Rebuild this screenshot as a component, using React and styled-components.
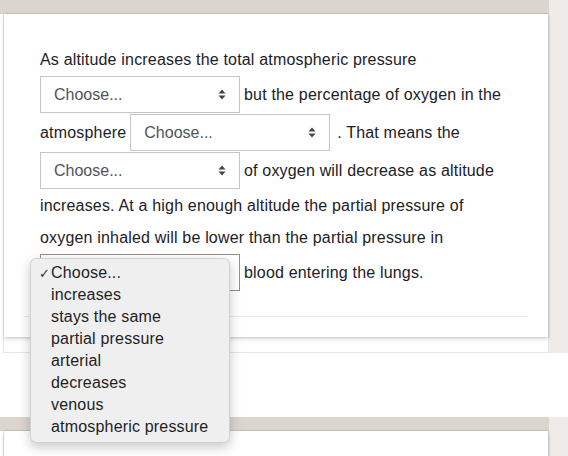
import React from 'react';
import styled, {createGlobalStyle} from 'styled-components';

const GlobalStyle = createGlobalStyle`
  body {
    margin: 0;
    background: #fff;
    font-family: "Liberation Sans", Arial, sans-serif;
  }
`;

const options = [
  'Choose...',
  'increases',
  'stays the same',
  'partial pressure',
  'arterial',
  'decreases',
  'venous',
  'atmospheric pressure'
];

const Arrow = () => (
  <svg width="8" height="11" viewBox="0 0 8 11">
    <path d="M4 0.5 L7.5 4.5 L0.5 4.5 Z" fill="#444" />
    <path d="M4 10.5 L7.5 6.5 L0.5 6.5 Z" fill="#444" />
  </svg>
);

// the open one shows its list on top, which hides its own label
const Choice = ({open, active}) => (
  <SelectWrap>
    <SelectBox $active={active}>
      {open ? <span /> : <span>Choose...</span>}
      <Arrow />
    </SelectBox>
    {open ? <Menu>
      {options.map((o, i) => <MenuItem key={o}>
        <Check>{i === 0 ? '✓' : ''}</Check>
        {o}
      </MenuItem>)}
    </Menu> : null}
  </SelectWrap>
);

const QuestionBlock = () => (
  <Block>
    <Main>
      <Band />
      <Frame>
        <Card>
          <Question>
            <Line>As altitude increases the total atmospheric pressure</Line>
            <Line $tall>
              <Choice />
              <span>but the percentage of oxygen in the</span>
            </Line>
            <Line $tall>
              <span>atmosphere</span>
              <Choice />
              <After>. That means the</After>
            </Line>
            <Line $tall>
              <Choice />
              <span>of oxygen will decrease as altitude</span>
            </Line>
            <Line>increases. At a high enough altitude the partial pressure of</Line>
            <Line>oxygen inhaled will be lower than the partial pressure in</Line>
            <Line $tall>
              <Choice open active />
              <span>blood entering the lungs.</span>
            </Line>
          </Question>
        </Card>
      </Frame>
    </Main>
    <Side />
  </Block>
);

export default function App() {
  return <Page>
    <GlobalStyle />
    <QuestionBlock />
    <Block $next>
      <Main>
        <Band />
        <Frame $stub>
          <Card $stub />
        </Frame>
      </Main>
      <Side />
    </Block>
  </Page>
}

const Page = styled.div`
  width: 568px;
  height: 456px;
  overflow: hidden;
  background: #fff;
`;

const Block = styled.div`
  display: flex;
  margin-top: ${p => p.$next ? '64px' : '0'};
`;

const Main = styled.div`
  width: 549px;
  flex: none;
`;

const Side = styled.div`
  flex: 1;
  background: #eeebe8;
`;

const Band = styled.div`
  height: 14px;
  background: #dcd5cf;
  box-shadow: inset 0 -1px 0 #d2cbc4;
`;

const Frame = styled.div`
  margin-left: 3px;
  border: 1px solid #e6e6e6;
  border-top: none;
  padding-bottom: ${p => p.$stub ? '0' : '15px'};
  background: #fff;
`;

const Card = styled.div`
  position: relative;
  background: #fff;
  padding: 30px 20px 20px;
  min-height: ${p => p.$stub ? '60px' : '0'};
  box-shadow: 0 2px 4px rgba(0, 0, 0, 0.16), 1px 0 2px rgba(0, 0, 0, 0.12);
`;

const Question = styled.div`
  padding: 0 0 24px 16px;
  border-bottom: 1px solid #e8e8e8;
  color: #1d2125;
  font-size: 16px;
  letter-spacing: 0.18px;
`;

const Line = styled.div`
  display: flex;
  align-items: center;
  gap: 4px;
  height: ${p => p.$tall ? '38px' : '32px'};
  white-space: nowrap;
`;

const After = styled.span`
  margin-left: 3px;
`;

const SelectWrap = styled.div`
  position: relative;
  align-self: flex-start;
`;

const SelectBox = styled.div`
  box-sizing: border-box;
  width: 200px;
  height: 37px;
  display: flex;
  align-items: center;
  justify-content: space-between;
  padding: 0 13px 0 13px;
  border: 1px solid ${p => p.$active ? '#9b8d84' : '#c6c6c6'};
  background: #fff;
  color: #4f5458;
  font-size: 16px;
  letter-spacing: 0;
`;

const Menu = styled.div`
  position: absolute;
  left: -10px;
  top: 4px;
  z-index: 10;
  box-sizing: border-box;
  width: 200px;
  padding: 3px 0 4px;
  background: #efefef;
  border: 1px solid rgba(0, 0, 0, 0.12);
  border-radius: 6px;
  box-shadow: 0 4px 12px rgba(0, 0, 0, 0.22);
`;

const MenuItem = styled.div`
  display: flex;
  align-items: center;
  height: 22px;
  color: #1e1e1e;
  font-size: 16px;
  letter-spacing: 0.18px;
`;

const Check = styled.span`
  width: 20px;
  padding-left: 8px;
  box-sizing: border-box;
  font-family: "DejaVu Sans", sans-serif;
  font-size: 13px;
  color: #333;
`;
